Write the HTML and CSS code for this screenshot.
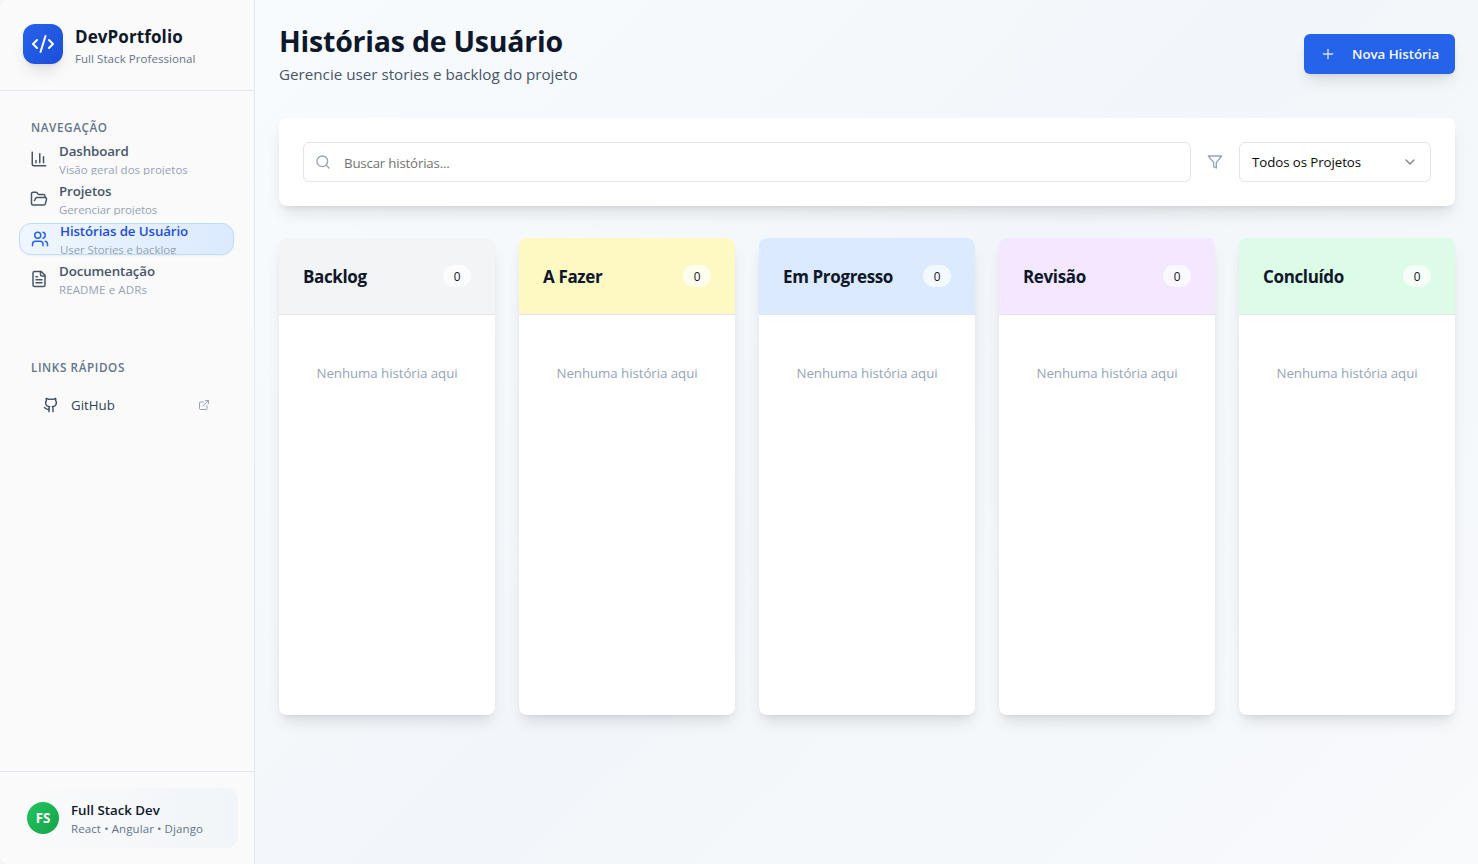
FILE: index.html
```html
<!DOCTYPE html>
<html lang="pt-BR">
<head>
<meta charset="utf-8">
<title>DevPortfolio</title>
<link rel="stylesheet" href="styles.css">
</head>
<body>
<div class="app">
  <aside class="sidebar">
    <header class="brand">
      <div class="brand-logo"><svg class="icon i24" viewBox="0 0 24 24"><path d="m18 16 4-4-4-4"/><path d="m6 8-4 4 4 4"/><path d="m14.5 4-5 16"/></svg></div>
      <div><div class="brand-name">DevPortfolio</div><div class="brand-sub">Full Stack Professional</div></div>
    </header>
    <nav class="nav">
      <div class="nav-heading">NAVEGAÇÃO</div>
      <ul class="menu">
        <li class="menu-item"><svg class="icon i18" viewBox="0 0 24 24"><path d="M3 3v16a2 2 0 0 0 2 2h16"/><path d="M18 17V9"/><path d="M13 17V5"/><path d="M8 17v-3"/></svg>
          <div><div class="menu-title">Dashboard</div><div class="menu-desc">Visão geral dos projetos</div></div></li>
        <li class="menu-item"><svg class="icon i18" viewBox="0 0 24 24"><path d="m6 14 1.5-2.9A2 2 0 0 1 9.24 10H20a2 2 0 0 1 1.94 2.5l-1.54 6a2 2 0 0 1-1.95 1.5H4a2 2 0 0 1-2-2V5a2 2 0 0 1 2-2h3.9a2 2 0 0 1 1.69.9l.81 1.2a2 2 0 0 0 1.67.9H18a2 2 0 0 1 2 2v2"/></svg>
          <div><div class="menu-title">Projetos</div><div class="menu-desc tight">Gerenciar projetos</div></div></li>
        <li class="menu-item active"><svg class="icon i18" viewBox="0 0 24 24"><path d="M16 21v-2a4 4 0 0 0-4-4H6a4 4 0 0 0-4 4v2"/><circle cx="9" cy="7" r="4"/><path d="M22 21v-2a4 4 0 0 0-3-3.87"/><path d="M16 3.13a4 4 0 0 1 0 7.75"/></svg>
          <div><div class="menu-title">Histórias de Usuário</div><div class="menu-desc tight">User Stories e backlog</div></div></li>
        <li class="menu-item"><svg class="icon i18" viewBox="0 0 24 24"><path d="M15 2H6a2 2 0 0 0-2 2v16a2 2 0 0 0 2 2h12a2 2 0 0 0 2-2V7Z"/><path d="M14 2v4a2 2 0 0 0 2 2h4"/><path d="M10 9H8"/><path d="M16 13H8"/><path d="M16 17H8"/></svg>
          <div><div class="menu-title">Documentação</div><div class="menu-desc wide">README e ADRs</div></div></li>
      </ul>
      <div class="nav-heading links-heading">LINKS RÁPIDOS</div>
      <a class="quick-link"><svg class="icon i16" viewBox="0 0 24 24"><path d="M15 22v-4a4.8 4.8 0 0 0-1-3.5c3 0 6-2 6-5.5.08-1.25-.27-2.48-1-3.5.28-1.15.28-2.35 0-3.5 0 0-1 0-3 1.5-2.64-.5-5.36-.5-8 0C6 2 5 2 5 2c-.3 1.15-.3 2.35 0 3.5A5.403 5.403 0 0 0 4 9c0 3.5 3 5.5 6 5.5-.39.49-.68 1.05-.85 1.65-.17.6-.22 1.23-.15 1.85v4"/><path d="M9 18c-4.51 2-5-2-7-2"/></svg><span>GitHub</span><svg class="icon i12 external" viewBox="0 0 24 24"><path d="M15 3h6v6"/><path d="M10 14 21 3"/><path d="M18 13v6a2 2 0 0 1-2 2H5a2 2 0 0 1-2-2V8a2 2 0 0 1 2-2h6"/></svg></a>
    </nav>
    <footer class="profile">
      <div class="profile-card">
        <div class="avatar">FS</div>
        <div><div class="profile-name">Full Stack Dev</div><div class="profile-stack">React • Angular • Django</div></div>
      </div>
    </footer>
  </aside>

  <main class="main">
    <div class="page-head">
      <div><h1 class="page-title">Histórias de Usuário</h1><p class="page-sub">Gerencie user stories e backlog do projeto</p></div>
      <button class="new-story"><svg class="icon i16" viewBox="0 0 24 24"><path d="M5 12h14"/><path d="M12 5v14"/></svg><span>Nova História</span></button>
    </div>
    <section class="filters">
      <div class="search"><svg class="icon i16" viewBox="0 0 24 24"><circle cx="11" cy="11" r="8"/><path d="m21 21-4.3-4.3"/></svg><span>Buscar histórias...</span></div>
      <svg class="icon i16 funnel" viewBox="0 0 24 24"><path d="M22 3H2l8 9.46V19l4 2v-8.54L22 3z"/></svg>
      <div class="select"><span>Todos os Projetos</span><svg class="icon i16" viewBox="0 0 24 24"><path d="m6 9 6 6 6-6"/></svg></div>
    </section>
    <section class="board">
      <article class="column"><header class="column-head gray"><h3>Backlog</h3><span class="count">0</span></header><p class="empty">Nenhuma história aqui</p></article>
      <article class="column"><header class="column-head yellow"><h3>A Fazer</h3><span class="count">0</span></header><p class="empty">Nenhuma história aqui</p></article>
      <article class="column"><header class="column-head blue"><h3>Em Progresso</h3><span class="count">0</span></header><p class="empty">Nenhuma história aqui</p></article>
      <article class="column"><header class="column-head purple"><h3>Revisão</h3><span class="count">0</span></header><p class="empty">Nenhuma história aqui</p></article>
      <article class="column"><header class="column-head green"><h3>Concluído</h3><span class="count">0</span></header><p class="empty">Nenhuma história aqui</p></article>
    </section>
  </main>
</div>
</body>
</html>
```
FILE: styles.css
```css
* { box-sizing: border-box; margin: 0; padding: 0; }

body {
  font-family: "Open Sans", "Noto Sans", sans-serif;
  font-size: 13.3px;
  color: #0f172a;
}

.app {
  display: flex;
  height: 864px;
  overflow: hidden;
  background: #f1f5f9;
}

.icon {
  flex: none;
  fill: none;
  stroke: currentColor;
  stroke-width: 2;
  stroke-linecap: round;
  stroke-linejoin: round;
}
.i12 { width: 12px; height: 12px; }
.i16 { width: 16px; height: 16px; }
.i18 { width: 18px; height: 18px; }
.i24 { width: 24px; height: 24px; }

/* Sidebar */
.sidebar {
  display: flex;
  flex: none;
  flex-direction: column;
  width: 255px;
  border-right: 1px solid #e2e8f0;
  border-radius: 8px 0 0 8px;
  background: #fafafa;
}

.brand {
  display: flex;
  gap: 12px;
  height: 91px;
  padding: 24px 23px;
  border-bottom: 1px solid #e2e8f0;
}
.brand-logo {
  display: grid;
  place-items: center;
  width: 40px;
  height: 40px;
  border-radius: 12px;
  background: linear-gradient(135deg, #2563eb, #1d4ed8);
  box-shadow: 0 10px 15px -3px rgb(0 0 0 / 10%), 0 4px 6px -4px rgb(0 0 0 / 10%);
  color: #fff;
}
.brand-name { height: 26px; font-size: 17px; font-weight: 700; line-height: 26px; letter-spacing: 0.1px; }
.brand-sub { font-size: 11.5px; font-weight: 500; line-height: 18px; letter-spacing: 0.06px; color: #64748b; }

.nav { flex: 1; padding: 27px 20px 0 19px; }
.nav-heading {
  height: 18px;
  padding-left: 12px;
  font-size: 11.7px;
  font-weight: 600;
  line-height: 18px;
  letter-spacing: 0.6px;
  color: #64748b;
}
.menu { display: grid; gap: 8px; margin-top: 7px; list-style: none; }
.menu-item {
  display: flex;
  align-items: center;
  gap: 11px;
  height: 32px;
  padding: 0 11px;
  overflow: hidden;
  border-radius: 12px;
  color: #475569;
}
.menu-title { padding-top: 1px; font-weight: 600; line-height: 20px; letter-spacing: -0.1px; }
.menu-desc { font-size: 11.5px; line-height: 17px; letter-spacing: 0.03px; color: #94a3b8; }
.menu-desc.tight { letter-spacing: -0.1px; }
.menu-desc.wide { letter-spacing: 0.12px; }
.menu-item.active {
  border: 1px solid #bfdbfe;
  background: linear-gradient(90deg, #eff6ff, #dbeafe);
  box-shadow: 0 1px 2px rgb(0 0 0 / 5%);
  color: #1d4ed8;
}
.menu-item.active .icon { color: #2563eb; }

.links-heading { margin-top: 63px; }
.quick-link {
  display: flex;
  align-items: center;
  gap: 12px;
  height: 36px;
  margin-top: 11px;
  padding: 0 24px;
  color: #334155;
}
.external { margin-left: auto; color: #94a3b8; }

.profile { height: 93px; padding: 16px 16px 16px 15px; border-top: 1px solid #e2e8f0; }
.profile-card {
  display: flex;
  align-items: center;
  gap: 12px;
  height: 60px;
  padding: 0 12px;
  border-radius: 12px;
  background: linear-gradient(90deg, #fafafa, #f1f5f9);
}
.avatar {
  display: grid;
  place-items: center;
  width: 32px;
  height: 32px;
  border-radius: 50%;
  background: linear-gradient(135deg, #22c55e, #16a34a);
  color: #fff;
  font-weight: 700;
}
.profile-name { font-weight: 600; line-height: 20px; }
.profile-stack { font-size: 11.5px; line-height: 17px; letter-spacing: 0.1px; color: #64748b; }

/* Main area */
.main {
  flex: 1;
  padding: 24px 23px 0 24px;
  background: linear-gradient(135deg, #f8fbfe 0%, #f2f6fa 50%, #f8fafc 100%);
}
.page-head { display: flex; justify-content: space-between; height: 94px; }
.page-title { height: 36px; font-size: 28.5px; font-weight: 700; line-height: 34px; letter-spacing: -0.22px; }
.page-sub { margin-top: 2px; font-size: 15.2px; line-height: 24px; color: #475569; }
.new-story {
  display: flex;
  align-items: center;
  gap: 16px;
  width: 151px;
  height: 40px;
  margin-top: 10px;
  padding: 0 0 0 16px;
  border: 0;
  border-radius: 6px;
  background: #2563eb;
  box-shadow: 0 10px 15px -3px rgb(0 0 0 / 10%), 0 4px 6px -4px rgb(0 0 0 / 10%);
  color: #f8fafc;
  font: inherit;
  font-weight: 600;
  letter-spacing: -0.03px;
}
.new-story .icon { opacity: 0.85; }

.filters {
  display: flex;
  align-items: center;
  gap: 16px;
  height: 88px;
  padding: 0 24px;
  border-radius: 8px;
  background: #fff;
  box-shadow: 0 10px 15px -3px rgb(0 0 0 / 10%), 0 4px 6px -4px rgb(0 0 0 / 10%);
}
.search, .select {
  display: flex;
  align-items: center;
  height: 40px;
  border: 1px solid #e5e5e5;
  border-radius: 6px;
}
.search { flex: 1; gap: 13px; padding-left: 11px; letter-spacing: -0.2px; color: #737373; }
.search span { padding-top: 2px; }
.search .icon { color: #94a3b8; }
.funnel { color: #94a3b8; }
.select { justify-content: space-between; width: 192px; padding: 0 12px; letter-spacing: -0.08px; color: #0a0a0a; }
.select .icon { opacity: 0.5; }

.board {
  display: grid;
  grid-template-columns: repeat(5, 1fr);
  gap: 24px;
  margin-top: 32px;
}
.column {
  height: 477px;
  overflow: hidden;
  border-radius: 8px;
  background: #fff;
  box-shadow: 0 10px 15px -3px rgb(0 0 0 / 10%), 0 4px 6px -4px rgb(0 0 0 / 10%);
}
.column-head {
  display: flex;
  align-items: center;
  justify-content: space-between;
  height: 77px;
  padding: 0 24px;
  border-bottom: 1px solid #e5e5e5;
}
.column-head h3 { font-size: 17px; font-weight: 700; letter-spacing: -0.36px; }
.gray { background: #f3f4f6; }
.yellow { background: #fef9c3; }
.blue { background: #dbeafe; }
.purple { background: #f3e8ff; }
.green { background: #dcfce7; }
.count {
  width: 28px;
  height: 22px;
  border-radius: 11px;
  background: rgb(255 255 255 / 70%);
  font-size: 11.8px;
  font-weight: 500;
  line-height: 22px;
  text-align: center;
}
.empty { margin-top: 48px; line-height: 20px; letter-spacing: -0.06px; text-align: center; color: #94a3b8; }
```
